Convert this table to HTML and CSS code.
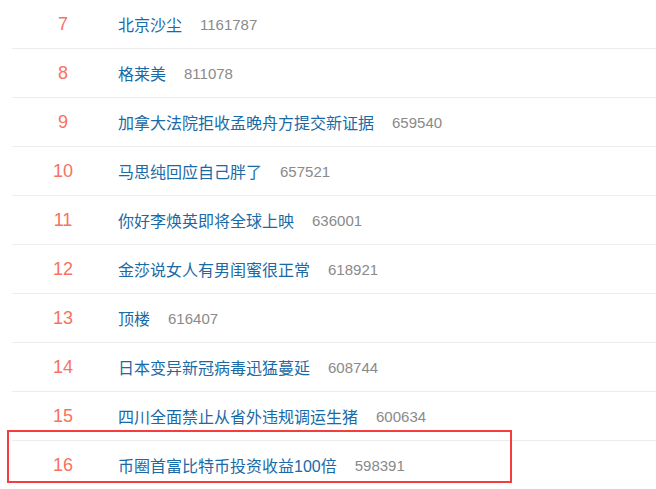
FILE: index.html
```html
<!DOCTYPE html>
<html>
<head>
    <meta charset="utf-8">
    <title>热搜榜</title>
    <link rel="stylesheet" href="styles.css">
</head>
<body>
    <ul class="hot-list">
        <li class="hot-item"><span class="rank">7</span><a class="title">北京沙尘</a><span class="count">1161787</span></li>
        <li class="hot-item"><span class="rank">8</span><a class="title">格莱美</a><span class="count">811078</span></li>
        <li class="hot-item"><span class="rank">9</span><a class="title">加拿大法院拒收孟晚舟方提交新证据</a><span class="count">659540</span></li>
        <li class="hot-item"><span class="rank">10</span><a class="title">马思纯回应自己胖了</a><span class="count">657521</span></li>
        <li class="hot-item"><span class="rank">11</span><a class="title">你好李焕英即将全球上映</a><span class="count">636001</span></li>
        <li class="hot-item"><span class="rank">12</span><a class="title">金莎说女人有男闺蜜很正常</a><span class="count">618921</span></li>
        <li class="hot-item"><span class="rank">13</span><a class="title">顶楼</a><span class="count">616407</span></li>
        <li class="hot-item"><span class="rank">14</span><a class="title">日本变异新冠病毒迅猛蔓延</a><span class="count">608744</span></li>
        <li class="hot-item"><span class="rank">15</span><a class="title">四川全面禁止从省外违规调运生猪</a><span class="count">600634</span></li>
        <li class="hot-item"><span class="rank">16</span><a class="title">币圈首富比特币投资收益100倍</a><span class="count">598391</span></li>
    </ul>

    <!-- 标注框 -->
    <div class="mark"></div>
</body>
</html>
```

FILE: styles.css
```css
body {
    margin: 0;
    background: #fff;
    font-family: "Liberation Sans", "Noto Sans CJK SC", sans-serif;
    overflow: hidden;
}
.hot-list {
    list-style: none;
    margin: 0;
    padding: 0 0 0 12px;
}
.hot-item {
    display: flex;
    align-items: center;
    height: 48px;
    border-bottom: 1px solid #ededed;
}
.rank {
    width: 102px;
    margin-right: 4px;
    text-align: center;
    color: #f7725f;
    font-size: 18px;
}
.title {
    color: #1a6aa6;
    font-size: 16px;
}
.count {
    margin-left: 18px;
    color: #8a8a8a;
    font-size: 15px;
}
.mark {
    position: absolute;
    left: 7px;
    top: 430px;
    width: 501px;
    height: 49px;
    border: 2px solid #f53d3d;
}
```
